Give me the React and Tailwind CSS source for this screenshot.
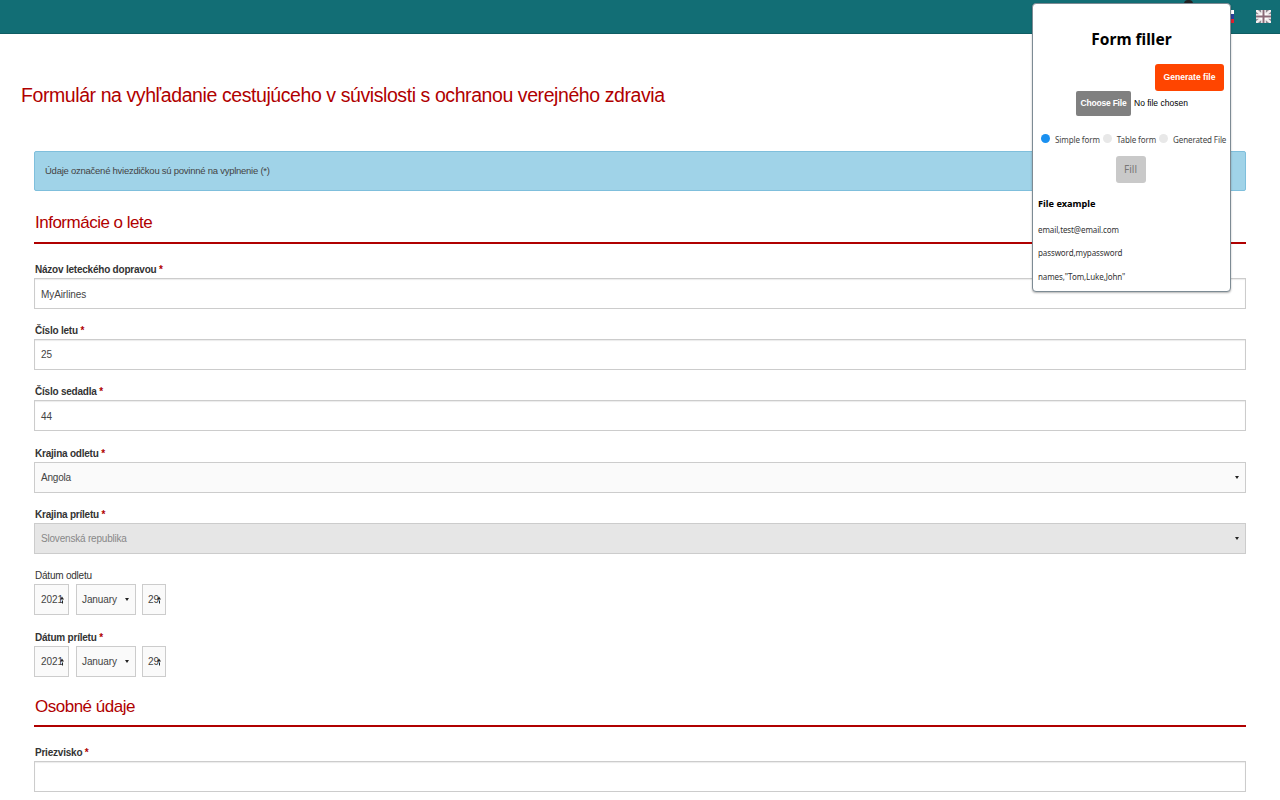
import React from "react";

function Label({ text, required = true, bold = true }) {
  return (
    <div className={`h-[18px] pl-[1px] text-[10px] leading-[20px] tracking-[-0.22px] text-[#333] ${bold ? "font-bold" : ""}`}>
      {text} {required && <span className="text-[#b00000]">*</span>}
    </div>
  );
}

function TextField({ label, value, className = "h-[61.5px]" }) {
  return (
    <div className={className}>
      <Label text={label} />
      <div className="flex h-[31px] items-center border border-[#ccc] bg-white px-[6px] pt-[1px] text-[10px] tracking-[-0.1px] text-[#444] shadow-[inset_0_1px_1px_rgba(0,0,0,0.08)]">
        {value}
      </div>
    </div>
  );
}

function SelectField({ label, value, disabled, className = "h-[61.5px]" }) {
  return (
    <div className={className}>
      <Label text={label} />
      <div className={`flex h-[31px] items-center justify-between border border-[#ccc] pl-[6px] pr-[6px] text-[10px] tracking-[-0.2px] ${disabled ? "bg-[#e6e6e6] text-[#888]" : "bg-[#fafafa] text-[#444]"}`}>
        {value}
        <span className="h-0 w-0 border-x-[2.5px] border-t-[3px] border-x-transparent border-t-[#222]" />
      </div>
    </div>
  );
}

function Spinner() {
  return (
    <span className="absolute right-[4px] top-1/2 flex -translate-y-1/2 flex-col items-center gap-[1px]">
      <span className="h-0 w-0 border-x-[2px] border-b-[3px] border-x-transparent border-b-[#222]" />
      <span className="h-[3px] w-[1px] bg-[#222]" />
    </span>
  );
}

function DateField({ label, required, bold, className = "h-[61.5px]" }) {
  return (
    <div className={className}>
      <Label text={label} required={required} bold={bold} />
      <div className="flex h-[31px] gap-[7px] text-[10px] tracking-[-0.1px] text-[#444]">
        <div className="relative flex w-[35px] items-center border border-[#ccc] bg-[#fafafa] pl-[6px]">
          2021
          <Spinner />
        </div>
        <div className="flex w-[60px] items-center justify-between border border-[#ccc] bg-[#fafafa] pl-[5px] pr-[6px]">
          January
          <span className="h-0 w-0 border-x-[2.5px] border-t-[3px] border-x-transparent border-t-[#222]" />
        </div>
        <div className="relative -ml-[1px] flex w-[24px] items-center border border-[#ccc] bg-[#fafafa] pl-[5px]">
          29
          <Spinner />
        </div>
      </div>
    </div>
  );
}

function SectionTitle({ text, className }) {
  return (
    <div className={`flex items-center border-b-2 border-[#b00000] pl-[1px] text-[17px] tracking-[-0.5px] text-[#b00000] ${className}`}>
      {text}
    </div>
  );
}

function Radio({ label, active }) {
  return (
    <div className="flex items-start gap-[5px]">
      <span className={`mt-[1px] h-[9px] w-[9px] shrink-0 rounded-full ${active ? "bg-[#1a90f0]" : "bg-[#e8e8e8]"}`} />
      <span className="mt-[1px] whitespace-nowrap text-[8px] leading-[12px] tracking-[-0.1px] text-[#444]">{label}</span>
    </div>
  );
}

function FormFiller() {
  return (
    <div className="absolute left-[1032px] top-[3px] h-[289px] w-[199px] rounded-[4px] border border-[#7d8b94] bg-white px-[5px] font-['Noto_Sans','Open_Sans',sans-serif] text-black shadow-[0_1px_2px_rgba(0,0,0,0.3)]">
      <div className="mt-[21px] h-[28px] text-center text-[15.5px] font-bold leading-[28px]">Form filler</div>
      <div className="mt-[11px] flex justify-end pr-[1px]">
        <div className="flex h-[27px] w-[69px] items-center justify-center rounded-[3px] bg-[#ff4500] font-['Liberation_Sans',sans-serif] text-[8.6px] font-bold text-white">
          Generate file
        </div>
      </div>
      <div className="ml-[38px] flex items-center gap-[3px] font-['Liberation_Sans',sans-serif] text-[8.5px]">
        <div className="flex h-[25px] w-[55px] items-center justify-center rounded-[2px] bg-[#808080] font-bold tracking-[-0.2px] text-white">Choose File</div>
        No file chosen
      </div>
      <div className="ml-[3px] mt-[17px] flex gap-[3px]">
        <Radio label="Simple form" active />
        <Radio label="Table form" />
        <Radio label="Generated File" />
      </div>
      <div className="mt-[10px] flex justify-center pr-[2px]">
        <div className="flex h-[27px] w-[30px] items-center justify-center rounded-[3px] bg-[#c9c9c9] text-[10px] text-[#777]">Fill</div>
      </div>
      <div className="mt-[13px] text-[9.2px] font-bold leading-[16px]">File example</div>
      <div className="mt-[6px] text-[8px] leading-[23.4px] tracking-[-0.1px] text-[#333]">
        <div>email,test@email.com</div>
        <div>password,mypassword</div>
        <div>names,"Tom,Luke,John"</div>
      </div>
    </div>
  );
}

export default function App() {
  return (
    <div className="relative h-[800px] w-[1280px] overflow-hidden bg-white font-['Liberation_Sans',Arial,sans-serif]">
      <header className="flex h-[34px] items-center justify-end border-b border-[#0f5d63] bg-[#126e75] pr-[9px]">
        <svg viewBox="0 0 15 13" className="h-[13px] w-[15px]">
          <rect width="15" height="13" fill="#8f8790" />
          <path d="M0 0l15 13M15 0L0 13" stroke="#f2eef0" strokeWidth="2.5" />
          <path d="M7.5 0v13M0 6.5h15" stroke="#fff" strokeWidth="4.5" />
          <path d="M7.5 0v13M0 6.5h15" stroke="#8a6a78" strokeWidth="2" />
        </svg>
      </header>
      {/* flag + dot peeking out behind the popup */}
      <div className="absolute left-[1231px] top-[10px] flex h-[13px] w-[3px] flex-col">
        <div className="h-1/3 bg-white" />
        <div className="h-1/3 bg-[#2a3f9a]" />
        <div className="h-1/3 bg-[#e0202f]" />
      </div>
      <div className="absolute left-[1184px] top-0 h-[4px] w-[9px] rounded-t-full bg-[#222]" />

      <h1 className="mt-[48px] h-[27px] pl-[21px] text-[19.5px] leading-[27px] tracking-[-0.42px] text-[#b00000]">
        Formulár na vyhľadanie cestujúceho v súvislosti s ochranou verejného zdravia
      </h1>

      <main className="ml-[34px] mt-[42px] w-[1212px]">
        <div className="flex h-[40px] items-center rounded-[2px] border border-[#7fbfdc] bg-[#a0d3e8] pl-[10px] pt-[1px] text-[9.5px] tracking-[-0.25px] text-[#444]">
          Údaje označené hviezdičkou sú povinné na vyplnenie (*)
        </div>
        <div className="mt-[12px]">
          <SectionTitle text="Informácie o lete" className="h-[41px]" />
        </div>
        <div className="mt-[16px]">
          <TextField label="Názov leteckého dopravou" value="MyAirlines" className="h-[60.5px]" />
          <TextField label="Číslo letu" value="25" />
          <TextField label="Číslo sedadla" value="44" />
          <SelectField label="Krajina odletu" value="Angola" />
          <SelectField label="Krajina príletu" value="Slovenská republika" disabled className="h-[61px]" />
          <DateField label="Dátum odletu" required={false} bold={false} className="h-[62px]" />
          <DateField label="Dátum príletu" required />
        </div>
        <div className="-mt-[1px]">
          <SectionTitle text="Osobné údaje" className="h-[38px]" />
        </div>
        <div className="mt-[16px]">
          <TextField label="Priezvisko" value="" />
        </div>
      </main>

      <FormFiller />
    </div>
  );
}
